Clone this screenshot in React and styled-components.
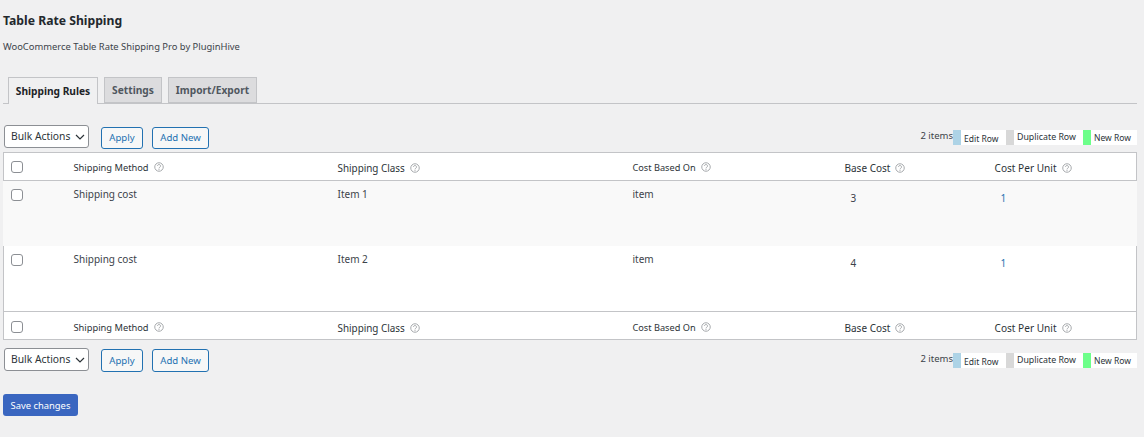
import React from "react"
import styled, { createGlobalStyle } from "styled-components"

const GlobalStyle = createGlobalStyle`
  html, body {
    margin: 0;
    background: #f0f0f1;
    font-family: "Noto Sans", "Open Sans", sans-serif;
    color: #3c434a;
    font-size: 11px;
  }
`

const Page = styled.div`
  width: 1144px;
  height: 437px;
  padding: 14px 7px 0 3px;
  box-sizing: border-box;
  overflow: hidden;
`

const Title = styled.h1`
  margin: 0;
  font-size: 12.2px;
  line-height: 14px;
  font-weight: 700;
  color: #23282d;
`

const Subtitle = styled.p`
  margin: 12px 0 0;
  font-size: 9.4px;
  line-height: 14px;
`

const Tabs = styled.nav`
  display: flex;
  gap: 6px;
  margin-top: 23px;
  padding-left: 5px;
  height: 26px;
  border-bottom: 1px solid #c3c4c7;
`

const Tab = styled.a`
  box-sizing: border-box;
  height: ${p => (p.$active ? "27px" : "26px")};
  width: ${p => p.$w}px;
  display: flex;
  align-items: center;
  justify-content: center;
  white-space: nowrap;
  border: 1px solid #c3c4c7;
  border-bottom: ${p => (p.$active ? "none" : "1px solid #c3c4c7")};
  background: ${p => (p.$active ? "#f0f0f1" : "#dcdcde")};
  color: ${p => (p.$active ? "#1d2327" : "#50575e")};
  font-weight: 700;
  font-size: 10.2px;
`

const Nav = styled.div`
  display: flex;
  align-items: flex-start;
  height: 27px;
  margin-top: ${p => p.$top}px;
  padding-left: 1px;
`

const Select = styled.div`
  box-sizing: border-box;
  width: 85px;
  height: 23px;
  border: 1px solid #8c8f94;
  border-radius: 3px;
  background: #fff;
  display: flex;
  align-items: center;
  gap: 5px;
  padding: 0 0 2px 6px;
  font-size: 10.3px;
  white-space: nowrap;
  color: #2c3338;
`

const Chevron = styled.svg`
  width: 10px;
  height: 6px;
  flex: none;
  margin-top: 2px;
`

const Button = styled.button`
  box-sizing: border-box;
  height: ${p => p.$h}px;
  margin: ${p => p.$drop}px 0 0 ${p => p.$left}px;
  width: ${p => p.$w}px;
  padding: 0 0 ${p => (p.$h === 22 ? 2 : 0)}px;
  background: #f6f7f7;
  border: 1px solid #2271b1;
  border-radius: 3px;
  color: #2271b1;
  font: 9.6px "Noto Sans", sans-serif;
`

const Legend = styled.div`
  margin-left: auto;
  display: flex;
  align-items: flex-start;
  margin-top: 5px;
  height: 15px;
`

const Count = styled.span`
  font-size: 9.5px;
  line-height: 12px;
`

const Swatch = styled.i`
  width: 8px;
  height: 15px;
  flex: none;
  background: ${p => p.$color};
`

const Key = styled.span`
  width: ${p => p.$w}px;
  height: 15px;
  background: #fff;
  font-size: ${p => p.$size || 8.5}px;
  line-height: ${p => p.$lh || 17}px;
  padding-left: ${p => p.$pad || 3}px;
  box-sizing: border-box;
  color: #2c3338;
  white-space: nowrap;
`

const Table = styled.table`
  width: 1134px;
  border: 1px solid #c3c4c7;
  border-collapse: collapse;
  table-layout: fixed;
  background: #fff;
`

const HeadCell = styled.th`
  box-sizing: border-box;
  height: 28px;
  padding: ${p => (p.$foot ? 4 : 2)}px 0 0;
  font-weight: 400;
  text-align: left;
  font-size: ${p => p.$size}px;
  color: #2c3338;
  border-${p => (p.$foot ? "top" : "bottom")}: 1px solid #c3c4c7;
  vertical-align: middle;
`

const Row = styled.tr`
  background: ${p => (p.$odd ? "#f9f9f9" : "#fff")};
  ${p => p.$odd && `
    td:first-child { border-left: 1px solid #f9f9f9; }
    td:last-child { border-right: 1px solid #f9f9f9; }
  `}
`

const Cell = styled.td`
  height: ${p => p.$h}px;
  padding: ${p => (p.$num ? "10px 0 0 6px" : "6px 0 0")};
  vertical-align: top;
  font-size: 10px;
  line-height: 15px;
  color: ${p => p.$color || "#3c434a"};
  box-sizing: border-box;
`

const CheckCell = styled.div`
  padding: ${p => (p.$body ? "2px 0 0 7px" : "0 0 2px 7px")};
  display: flex;
`

const Check = styled.span`
  box-sizing: border-box;
  width: 12px;
  height: 12px;
  border: 1px solid #8c8f94;
  border-radius: 3px;
  background: #fff;
`

const HelpIcon = styled.svg`
  width: 10px;
  height: 10px;
  margin-left: 5px;
  vertical-align: -1px;
`

const SaveButton = styled.button`
  display: block;
  width: 75px;
  height: 22px;
  margin-top: 19px;
  padding: 0;
  background: #3a66c0;
  border: none;
  border-radius: 3px;
  color: #fff;
  font: 9.4px "Noto Sans", sans-serif;
`

const Help = () => (
  <HelpIcon viewBox="0 0 20 20">
    <circle cx="10" cy="10" r="8.5" fill="none" stroke="#a7aaad" strokeWidth="2" />
    <path d="M7 8a3 3 0 1 1 4.6 2.5c-1 .6-1.6 1.1-1.6 2.3" fill="none" stroke="#a7aaad" strokeWidth="2" />
    <circle cx="10" cy="15.2" r="1.2" fill="#a7aaad" />
  </HelpIcon>
)

const columns = [
  { label: "Shipping Method", size: 9.3 },
  { label: "Shipping Class", size: 9.9 },
  { label: "Cost Based On", size: 9.2 },
  { label: "Base Cost", size: 10 },
  { label: "Cost Per Unit", size: 10.1 },
]

const rows = [
  { cls: "Item 1", base: 3, unit: 1, h: 65 },
  { cls: "Item 2", base: 4, unit: 1, h: 66 },
]

function TableNav({ top, drop, btnH }) {
  return (
    <Nav $top={top}>
      <Select>
        Bulk Actions
        <Chevron viewBox="0 0 10 6">
          <path d="M1 1l4 4 4-4" fill="none" stroke="#2c3338" strokeWidth="1.2" />
        </Chevron>
      </Select>
      <Button $left={12} $w={42} $drop={drop} $h={btnH}>Apply</Button>
      <Button $left={9} $w={57} $drop={drop} $h={btnH}>Add New</Button>
      <Legend>
        <Count>2 items</Count>
        <Swatch $color="#add3e6" />
        <Key $w={45}>Edit Row</Key>
        <Swatch $color="#d8d8d8" />
        <Key $w={69} $lh={15} $size={8.8} $pad={3}>Duplicate Row</Key>
        <Swatch $color="#6dff8a" />
        <Key $w={46} $lh={16} $pad={3}>New Row</Key>
      </Legend>
    </Nav>
  )
}

function HeadRow({ foot }) {
  return (
    <tr>
      <HeadCell $foot={foot}>
        <CheckCell><Check /></CheckCell>
      </HeadCell>
      {columns.map(c => (
        <HeadCell key={c.label} $foot={foot} $size={c.size}>
          {c.label}
          <Help />
        </HeadCell>
      ))}
    </tr>
  )
}

export default function App() {
  return (
    <Page>
      <GlobalStyle />
      <Title>Table Rate Shipping</Title>
      <Subtitle>WooCommerce Table Rate Shipping Pro by PluginHive</Subtitle>
      <Tabs>
        <Tab $active $w={90}>Shipping Rules</Tab>
        <Tab $w={58}>Settings</Tab>
        <Tab $w={89}>Import/Export</Tab>
      </Tabs>
      <TableNav top={21} drop={2} btnH={22} />
      <Table>
        <colgroup>
          <col style={{ width: 70 }} />
          <col style={{ width: 264 }} />
          <col style={{ width: 295 }} />
          <col style={{ width: 212 }} />
          <col style={{ width: 150 }} />
          <col />
        </colgroup>
        <thead>
          <HeadRow />
        </thead>
        <tbody>
          {rows.map((r, i) => (
            <Row key={r.cls} $odd={i === 0}>
              <Cell $h={r.h}>
                <CheckCell $body><Check /></CheckCell>
              </Cell>
              <Cell $h={r.h}>Shipping cost</Cell>
              <Cell $h={r.h}>{r.cls}</Cell>
              <Cell $h={r.h}>item</Cell>
              <Cell $h={r.h} $num>{r.base}</Cell>
              <Cell $h={r.h} $num $color="#2271b1">{r.unit}</Cell>
            </Row>
          ))}
        </tbody>
        <tfoot>
          <HeadRow foot />
        </tfoot>
      </Table>
      <TableNav top={8} drop={1} btnH={23} />
      <SaveButton>Save changes</SaveButton>
    </Page>
  )
}
